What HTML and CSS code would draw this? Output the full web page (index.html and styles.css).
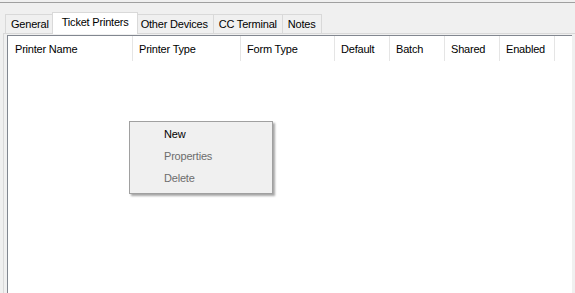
FILE: index.html
```html
<!DOCTYPE html>
<html lang="en">
	<head>
	<meta charset="UTF-8" />
	<title>Ticket Printers</title>
	<link rel="stylesheet" href="styles.css">
	</head>
	<body>
		<div class="rule"></div>
		<ul class="tabs">
			<li class="tab">General</li>
			<li class="tab active">Ticket Printers</li>
			<li class="tab">Other Devices</li>
			<li class="tab">CC Terminal</li>
			<li class="tab">Notes</li>
		</ul>
		<div class="panel">
			<div class="listview">
				<div class="header">
					<div class="col w1">Printer Name</div>
					<div class="col w2">Printer Type</div>
					<div class="col w3">Form Type</div>
					<div class="col w4">Default</div>
					<div class="col w4">Batch</div>
					<div class="col w4">Shared</div>
					<div class="col w4">Enabled</div>
				</div>
			</div>
		</div>
		<ul class="menu">
			<li>New</li>
			<li class="disabled">Properties</li>
			<li class="disabled">Delete</li>
		</ul>
	</body>
</html>
```
FILE: styles.css
```css
* { box-sizing: border-box; }
html { font-family: "Liberation Sans", Arial, sans-serif; font-size: 11px; letter-spacing: -0.2px; }
body { margin: 0; height: 293px; overflow: hidden; background: #f0f0f0; color: #000; }
ul { list-style: none; margin: 0; padding: 0; }

.rule { height: 1px; margin-top: 2px; background: #a0a0a0; }

/* tab strip */
.tabs { display: flex; align-items: flex-end; height: 22px; margin: 9px 0 -1px 5px; position: relative; z-index: 1; }
.tab { height: 19px; line-height: 19px; padding: 0 5px; margin-bottom: 1px; margin-left: -1px; border: 1px solid #d9d9d9; border-bottom: 0; white-space: nowrap; }
.tab:first-child { margin-left: 0; padding: 0 4px 0 5px; }
.tab.active { height: 22px; line-height: 19px; margin: 0 -2px 0 -2px; padding: 0 8px 0 9px; background: #fff; position: relative; }

.panel { margin-left: 3px; padding: 1px 3px; height: 300px; border: 1px solid #d9d9d9; border-right: 0; }
.listview { height: 300px; background: #fff; border: 1px solid #828790; border-right: 0; }
.header { display: flex; height: 25px; }
.col { padding: 7px 0 0 7px; border-right: 1px solid #e5e5e5; white-space: nowrap; }
.w1 { width: 125px; }
.w2 { width: 108px; padding-left: 6px; }
.w3 { width: 94px; padding-left: 6px; }
.w4 { width: 55px; padding-left: 6px; }

/* context menu */
.menu { position: absolute; left: 129px; top: 121px; width: 144px; height: 73px; padding-top: 1px; background: #f0f0f0; border: 1px solid #a0a0a0; box-shadow: 2px 2px 2px rgba(0, 0, 0, 0.35); }
.menu li { height: 22px; line-height: 22px; padding-left: 34px; }
.menu li.disabled { color: #6d6d6d; }
```
